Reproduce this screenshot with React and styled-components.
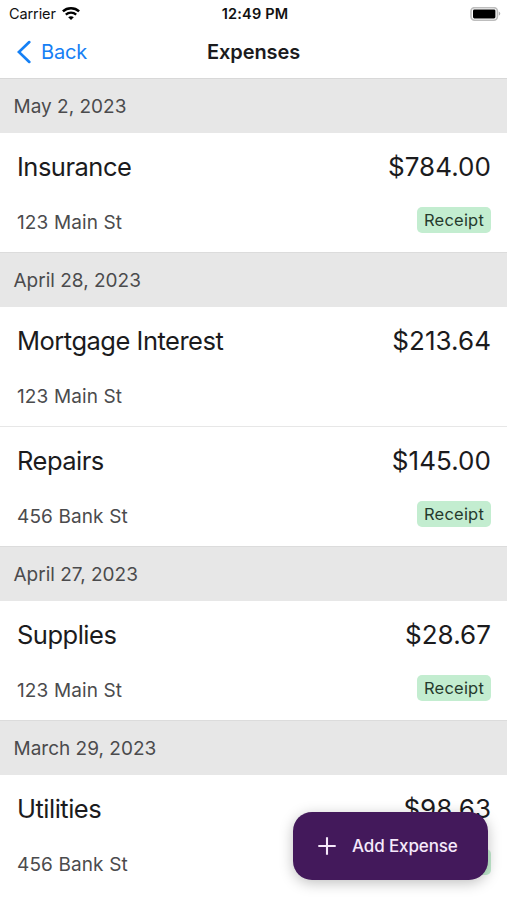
import React from "react";
import styled, { createGlobalStyle } from "styled-components";

const GlobalStyle = createGlobalStyle`
  * {
    box-sizing: border-box;
  }

  body {
    margin: 0;
    background: #fff;
    font-family: Inter, "Liberation Sans", sans-serif;
    color: #1b1b1d;
  }
`;

const Screen = styled.div`
  position: relative;
  display: flex;
  flex-direction: column;
  height: 900px;
  overflow: hidden;
  background: #fff;
`;

const StatusBar = styled.div`
  display: grid;
  grid-template-columns: 1fr auto 1fr;
  align-items: center;
  flex: none;
  height: 27px;
  padding: 0 6px 0 9px;
  color: #111;
  font-size: 14.5px;
`;

const Carrier = styled.div`
  display: flex;
  align-items: center;
  gap: 6px;
  letter-spacing: -0.1px;
`;

const Clock = styled.span`
  font-weight: 600;
  letter-spacing: 0.2px;
`;

const Battery = styled.svg`
  justify-self: end;
`;

const NavBar = styled.header`
  display: grid;
  grid-template-columns: 1fr auto 1fr;
  align-items: center;
  flex: none;
  height: 52px;
  padding: 0 17px 1px;
  border-bottom: 1px solid #d8d8d8;
`;

const BackButton = styled.button`
  display: flex;
  align-items: center;
  gap: 10px;
  padding: 0;
  border: 0;
  background: none;
  color: #1580f5;
  font: inherit;
  font-size: 20px;
  letter-spacing: -0.15px;
`;

const Title = styled.h1`
  margin: 0;
  font-size: 20px;
  font-weight: 600;
  letter-spacing: -0.1px;
`;

const DateHeader = styled.h2`
  flex: none;
  height: 54px;
  margin: 0;
  padding: 0 13.5px;
  background: #e7e7e7;
  color: #4b4b4d;
  font-size: 19px;
  font-weight: 400;
  line-height: 55px;
  letter-spacing: 0;
`;

const Row = styled.div`
  display: flex;
  flex-direction: column;
  flex: none;
  height: 120px;
  padding: 13px 16px 0 17px;
  border-bottom: 1px solid ${({ $last }) => ($last ? "#dcdcdc" : "#e7e7e7")};

  &:nth-last-child(2) {
    height: 125px;
    border-bottom: 0;
  }
`;

const Line = styled.div`
  display: flex;
  align-items: center;
  justify-content: space-between;
  height: 40px;

  & + & {
    margin-top: 16px;
  }
`;

const Category = styled.span`
  font-size: 25.5px;
  letter-spacing: -0.5px;
`;

const Amount = styled.span`
  font-size: 26px;
  letter-spacing: 0.05px;
`;

const Property = styled.span`
  color: #4b4b4d;
  font-size: 19px;
  letter-spacing: 0.12px;
`;

const ReceiptBadge = styled.span`
  height: 26px;
  margin-top: -5px;
  padding: 0 7px;
  border-radius: 5px;
  background: #c3edd0;
  color: #263a2d;
  font-size: 16.5px;
  line-height: 26px;
  letter-spacing: 0.2px;
`;

const AddButton = styled.button`
  position: absolute;
  right: 19px;
  bottom: 20px;
  display: flex;
  align-items: center;
  gap: 16px;
  width: 195px;
  height: 68px;
  padding: 0 0 0 25px;
  border: 0;
  border-radius: 19px;
  background: #43195b;
  box-shadow: 0 3px 14px rgba(0, 0, 0, 0.25);
  color: #f6e9fb;
  font: inherit;
  font-size: 17px;
  font-weight: 500;
  letter-spacing: -0.12px;
`;

const groups = [
  {
    date: "May 2, 2023",
    expenses: [
      { category: "Insurance", amount: "$784.00", property: "123 Main St", receipt: true },
    ],
  },
  {
    date: "April 28, 2023",
    expenses: [
      { category: "Mortgage Interest", amount: "$213.64", property: "123 Main St" },
      { category: "Repairs", amount: "$145.00", property: "456 Bank St", receipt: true },
    ],
  },
  {
    date: "April 27, 2023",
    expenses: [
      { category: "Supplies", amount: "$28.67", property: "123 Main St", receipt: true },
    ],
  },
  {
    date: "March 29, 2023",
    expenses: [
      { category: "Utilities", amount: "$98.63", property: "456 Bank St", receipt: true },
    ],
  },
];

const WifiIcon = () => (
  <svg width="18" height="14" viewBox="0 0 18 14" fill="none" stroke="#000">
    <path d="M.9 4.4C5.4.2 12.6.2 17.1 4.4" strokeWidth="2.5" />
    <path d="M3.8 7.6c2.9-2.6 7.5-2.6 10.4 0" strokeWidth="2.3" />
    <path d="M9 13.1 6.2 10.3c1.6-1.4 4-1.4 5.6 0z" fill="#000" stroke="none" />
  </svg>
);

const BatteryIcon = () => (
  <Battery width="31" height="14" viewBox="0 0 31 14">
    <rect x="1" y="0.6" width="26.4" height="12.6" rx="3.6" fill="#fff" stroke="#bdbdbd" strokeWidth="1.6" />
    <rect x="3" y="2.4" width="22.4" height="9" rx="1.4" fill="#000" />
    <path d="M28.8 4.6c2 .8 2 3.4 0 4.2z" fill="#b0b0b0" />
  </Battery>
);

const ChevronIcon = () => (
  <svg width="14" height="24" viewBox="0 0 14 24" fill="none" stroke="currentColor" strokeWidth="2.7">
    <path d="M12.3 2.1 1.9 12l10.4 9.9" strokeLinecap="round" strokeLinejoin="miter" />
  </svg>
);

const PlusIcon = () => (
  <svg width="18" height="18" viewBox="0 0 18 18" fill="none" stroke="currentColor" strokeWidth="2.1">
    <path d="M9 .3v17.4M.3 9h17.4" />
  </svg>
);

const ExpenseRow = ({ expense, last }) => (
  <Row $last={last}>
    <Line>
      <Category>{expense.category}</Category>
      <Amount>{expense.amount}</Amount>
    </Line>
    <Line>
      <Property>{expense.property}</Property>
      {expense.receipt && <ReceiptBadge>Receipt</ReceiptBadge>}
    </Line>
  </Row>
);

const App = () => {
  return (
    <>
      <GlobalStyle />
      <Screen>
        <StatusBar>
          <Carrier>
            Carrier
            <WifiIcon />
          </Carrier>
          <Clock>12:49 PM</Clock>
          <BatteryIcon />
        </StatusBar>
        <NavBar>
          <BackButton>
            <ChevronIcon />
            Back
          </BackButton>
          <Title>Expenses</Title>
        </NavBar>
        {groups.map(({ date, expenses }) => (
          <React.Fragment key={date}>
            <DateHeader>{date}</DateHeader>
            {expenses.map((expense, i) => (
              <ExpenseRow
                key={expense.category}
                expense={expense}
                last={i === expenses.length - 1}
              />
            ))}
          </React.Fragment>
        ))}
        <AddButton>
          <PlusIcon />
          Add Expense
        </AddButton>
      </Screen>
    </>
  );
};

export default App;
